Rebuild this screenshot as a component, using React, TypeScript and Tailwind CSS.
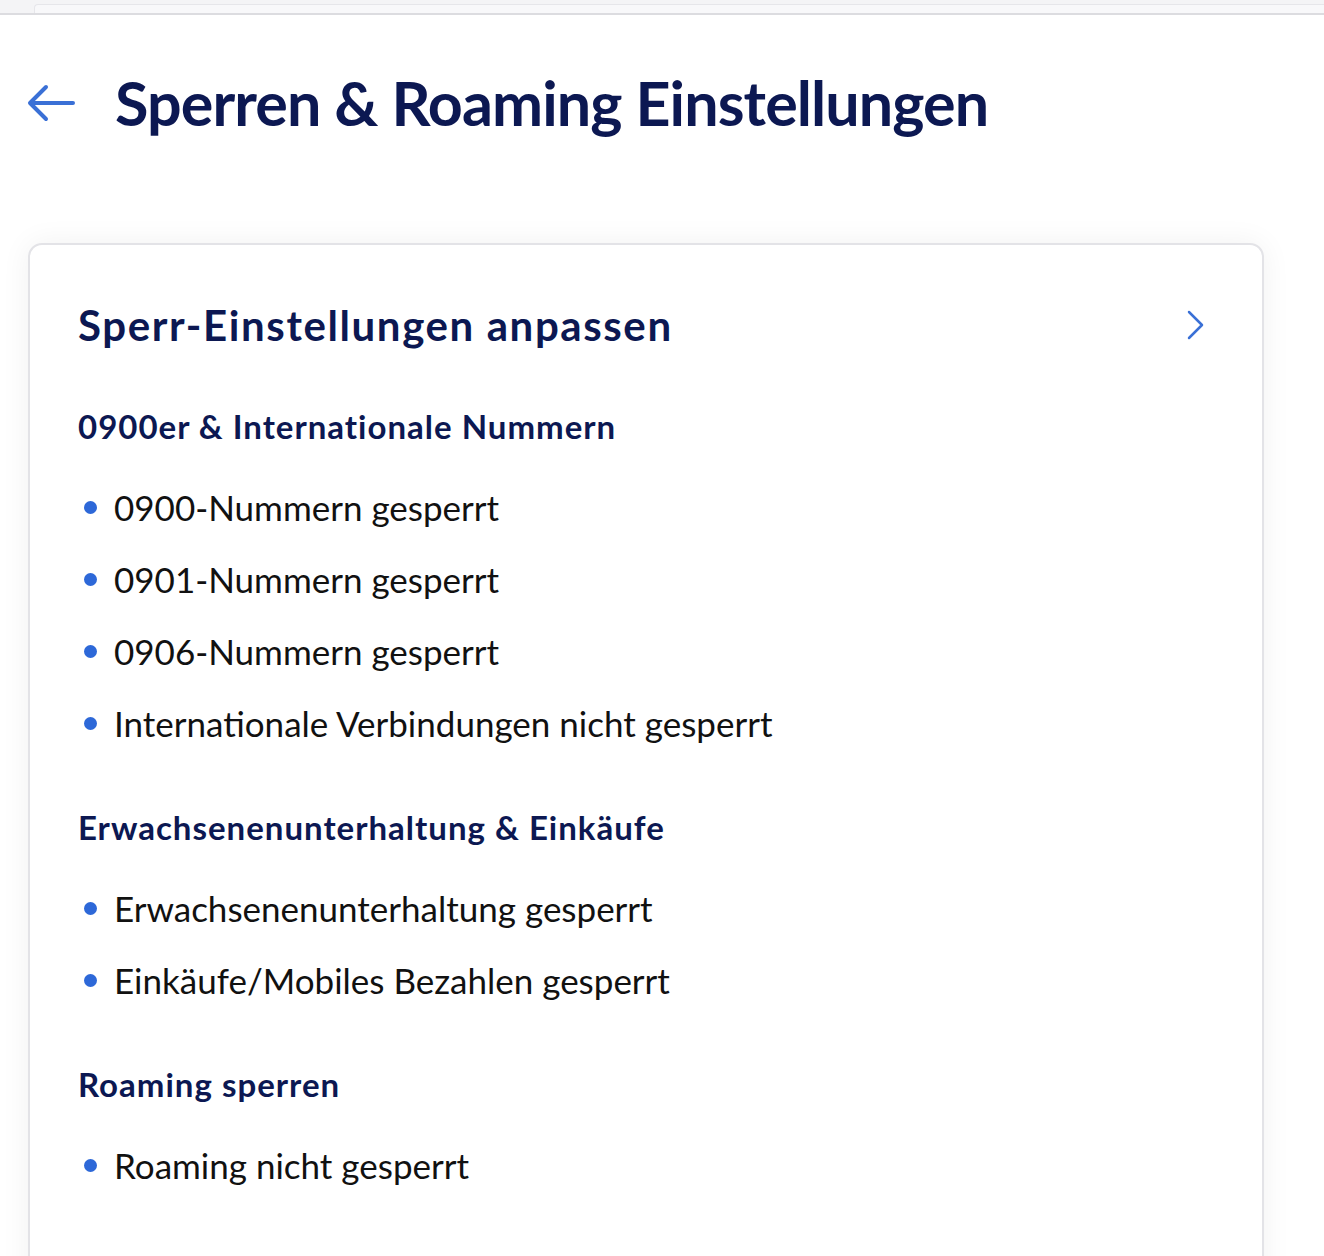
import React from "react";

const sections = [
  {
    title: "0900er & Internationale Nummern",
    items: [
      "0900-Nummern gesperrt",
      "0901-Nummern gesperrt",
      "0906-Nummern gesperrt",
      "Internationale Verbindungen nicht gesperrt",
    ],
  },
  {
    title: "Erwachsenenunterhaltung & Einkäufe",
    items: ["Erwachsenenunterhaltung gesperrt", "Einkäufe/Mobiles Bezahlen gesperrt"],
  },
  {
    title: "Roaming sperren",
    items: ["Roaming nicht gesperrt"],
  },
];

const App = () => {
  return (
    <div className="min-h-screen bg-white font-['Lato','Noto_Sans',sans-serif]">
      {/* browser chrome strip */}
      <div className="h-[15px] bg-[#f4f4f6] border-b-2 border-[#dcdce0] overflow-hidden">
        <div className="ml-[34px] h-[13px] border-t-[1.5px] border-l-[1.5px] border-[#e6e6ea] rounded-tl-[4px] bg-[#f8f8fa] translate-y-[4px]" />
      </div>

      <div className="flex items-center pl-[26px] pt-[52px] h-[124px]">
        <svg width="50" height="40" viewBox="0 0 50 40" fill="none" className="shrink-0">
          <path
            d="M47 20H5M20 4L4 20l16 16"
            stroke="#3a70d6"
            strokeWidth="4"
            strokeLinecap="round"
            strokeLinejoin="round"
          />
        </svg>
        <h1 className="ml-[39px] text-[61px] leading-[72px] font-bold text-[#0c1852] tracking-[-0.9px]">
          Sperren &amp; Roaming Einstellungen
        </h1>
      </div>

      <div className="mt-[104px] ml-[28px] w-[1236px] rounded-[14px] border-2 border-[#e3e3e7] bg-white shadow-[0_0_30px_rgba(0,0,0,0.06)] pl-[48px] pr-[58px] pt-[56px] pb-[100px]">
        <div className="flex items-center justify-between">
          <h2 className="text-[42px] leading-[48px] font-bold text-[#0c1852] tracking-[1.6px]">
            Sperr-Einstellungen anpassen
          </h2>
          <svg width="18" height="30" viewBox="0 0 18 30" fill="none">
            <path
              d="M3 2l13 13L3 28"
              stroke="#3a70d6"
              strokeWidth="2.5"
              strokeLinecap="round"
              strokeLinejoin="round"
            />
          </svg>
        </div>

        {sections.map((s, i) => (
          <div key={s.title} className={i === 0 ? "mt-[57px]" : "mt-[48px]"}>
            <h3 className="text-[33px] leading-[40px] font-bold text-[#0c1852] tracking-[1px]">
              {s.title}
            </h3>
            <ul className="mt-[25px]">
              {s.items.map((it) => (
                <li key={it} className="flex items-center h-[72px]">
                  <span className="ml-[6px] w-[13px] h-[13px] rounded-full bg-[#2d68d8] shrink-0" />
                  <span className="ml-[17px] text-[35px] text-[#111111] tracking-[0px]">
                    {it}
                  </span>
                </li>
              ))}
            </ul>
          </div>
        ))}
      </div>
    </div>
  );
};

export default App;
